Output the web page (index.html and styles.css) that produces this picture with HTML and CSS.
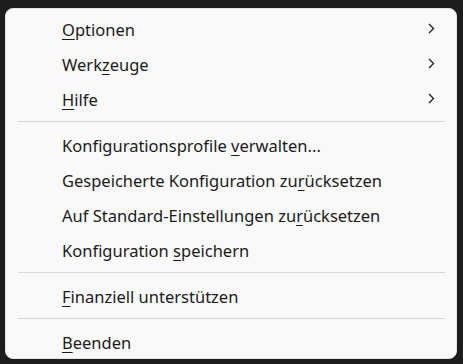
FILE: index.html
```html
<!DOCTYPE html>
<html>
<head>
<link rel="stylesheet" href="styles.css">
</head>
<body>
    <div class="menu">
        <div class="item"><span class="label"><u>O</u>ptionen</span><svg class="chevron" width="7" height="11" viewBox="0 0 7 11"><path d="M1 1 L5.5 5.5 L1 10" /></svg></div>
        <div class="item"><span class="label">Werk<u>z</u>euge</span><svg class="chevron" width="7" height="11" viewBox="0 0 7 11"><path d="M1 1 L5.5 5.5 L1 10" /></svg></div>
        <div class="item"><span class="label"><u>H</u>ilfe</span><svg class="chevron" width="7" height="11" viewBox="0 0 7 11"><path d="M1 1 L5.5 5.5 L1 10" /></svg></div>
        <div class="separator"></div>
        <div class="item"><span class="label">Konfigurationsprofile <u>v</u>erwalten...</span></div>
        <div class="item"><span class="label">Gespeicherte Konfiguration zu<u>r</u>ücksetzen</span></div>
        <div class="item"><span class="label">Auf Standard-Einstellungen zu<u>r</u>ücksetzen</span></div>
        <div class="item"><span class="label">Konfiguration <u>s</u>peichern</span></div>
        <div class="separator"></div>
        <div class="item"><span class="label"><u>F</u>inanziell unterstützen</span></div>
        <div class="separator"></div>
        <div class="item"><span class="label"><u>B</u>eenden</span></div>
    </div>
</body>
</html>
```

FILE: styles.css
```css
html, body {
    margin: 0;
    background: #1c1c1c;
}

.menu {
    margin: 8px 6px 0 5px;
    height: 351px;
    box-sizing: border-box;
    padding-top: 3px;
    background: #f9f9f9;
    border: 1px solid #e2e2e2;
    border-radius: 8px;
    font-family: "Noto Sans", sans-serif;
    font-size: 16.5px;
    color: #1b1b1b;
}

.item {
    display: flex;
    align-items: center;
    justify-content: space-between;
    height: 35px;
    padding: 0 21px 0 56px;
}

.item u {
    text-decoration-thickness: 1px;
    text-underline-offset: 3px;
}

.chevron {
    margin-top: -3px;
}

.chevron path {
    fill: none;
    stroke: #1b1b1b;
    stroke-width: 1.3;
}

.separator {
    height: 1px;
    margin: 4px 11px 6px 12px;
    background: #d8d8d8;
}
```
